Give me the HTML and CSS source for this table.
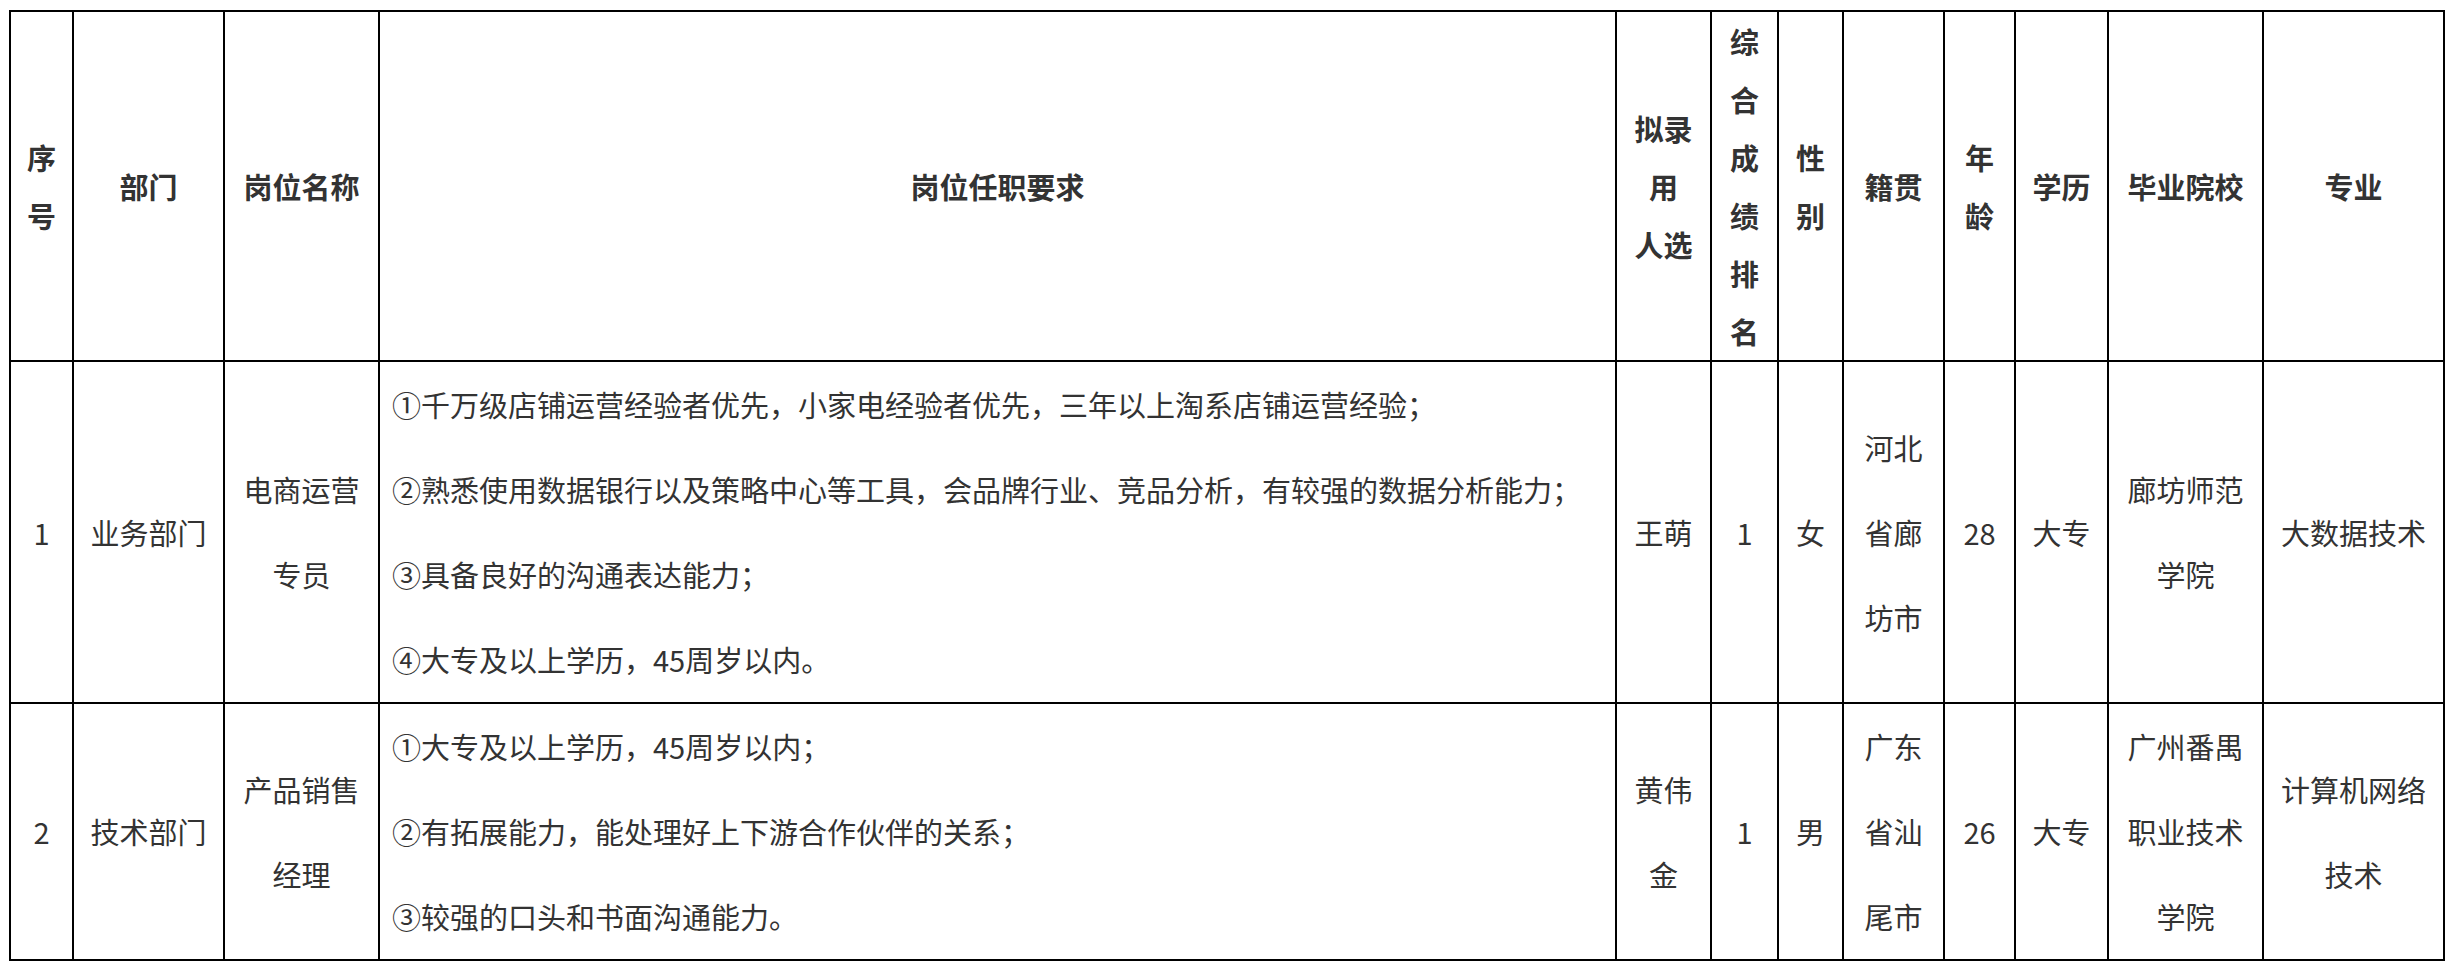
FILE: index.html
```html
<!DOCTYPE html>
<html lang="zh-CN">
<head>
<meta charset="utf-8">
<title>拟录用人选公示</title>
<link rel="stylesheet" href="styles.css">
</head>
<body>
<table class="roster">
  <colgroup>
    <col class="c-no">
    <col class="c-dept">
    <col class="c-title">
    <col class="c-req">
    <col class="c-name">
    <col class="c-rank">
    <col class="c-sex">
    <col class="c-origin">
    <col class="c-age">
    <col class="c-edu">
    <col class="c-school">
    <col class="c-major">
  </colgroup>
  <thead>
    <tr class="head-row">
      <th>序号</th>
      <th>部门</th>
      <th>岗位名称</th>
      <th>岗位任职要求</th>
      <th>拟录<br>用<br>人选</th>
      <th>综合成绩排名</th>
      <th>性别</th>
      <th>籍贯</th>
      <th>年龄</th>
      <th>学历</th>
      <th>毕业院校</th>
      <th>专业</th>
    </tr>
  </thead>
  <tbody>
    <tr>
      <td>1</td>
      <td>业务部门</td>
      <td>电商运营专员</td>
      <td class="req">
        <p>①千万级店铺运营经验者优先，小家电经验者优先，三年以上淘系店铺运营经验；</p>
        <p>②熟悉使用数据银行以及策略中心等工具，会品牌行业、竞品分析，有较强的数据分析能力；</p>
        <p>③具备良好的沟通表达能力；</p>
        <p>④大专及以上学历，45周岁以内。</p>
      </td>
      <td>王萌</td>
      <td>1</td>
      <td>女</td>
      <td>河北省廊坊市</td>
      <td>28</td>
      <td>大专</td>
      <td>廊坊师范学院</td>
      <td>大数据技术</td>
    </tr>
    <tr>
      <td>2</td>
      <td>技术部门</td>
      <td>产品销售经理</td>
      <td class="req">
        <p>①大专及以上学历，45周岁以内；</p>
        <p>②有拓展能力，能处理好上下游合作伙伴的关系；</p>
        <p>③较强的口头和书面沟通能力。</p>
      </td>
      <td>黄伟金</td>
      <td>1</td>
      <td>男</td>
      <td>广东省汕尾市</td>
      <td>26</td>
      <td>大专</td>
      <td>广州番禺职业技术学院</td>
      <td>计算机网络技术</td>
    </tr>
  </tbody>
</table>
</body>
</html>
```
FILE: styles.css
```css
html, body {
  background: #ffffff;
}

body {
  margin: 10px 0 0 9px;
  font-family: "Noto Sans CJK SC", "Microsoft YaHei", sans-serif;
  color: #333333;
}

.roster {
  border-collapse: collapse;
  table-layout: fixed;
  width: 2436px;
  font-size: 29px;
  text-spacing-trim: space-all;
}

.c-no { width: 63px; }
.c-dept { width: 151px; }
.c-title { width: 155px; }
.c-req { width: 1237px; }
.c-name { width: 95px; }
.c-rank { width: 67px; }
.c-sex { width: 65px; }
.c-origin { width: 101px; }
.c-age { width: 71px; }
.c-edu { width: 93px; }
.c-school { width: 155px; }
.c-major { width: 181px; }

.roster th,
.roster td {
  border: 2px solid #000000;
  padding: 0 12px;
  text-align: center;
  vertical-align: middle;
  word-break: break-all;
}

.roster th {
  font-weight: 700;
  line-height: 58px;
}

.roster td {
  font-weight: 400;
  line-height: 85px;
}

.roster td.req {
  text-align: left;
}

.req p {
  margin: 0;
}
```
